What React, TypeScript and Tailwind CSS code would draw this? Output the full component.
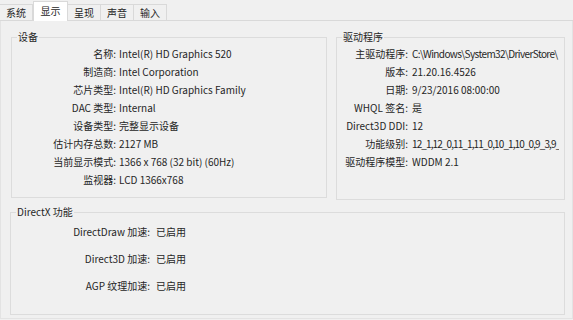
const font = { fontFamily: '"Noto Sans CJK SC", "Noto Sans", sans-serif' };

const tabs = ["系统", "显示", "呈现", "声音", "输入"];
const tabWidths = ["w-[33px]", "w-[35px]", "w-[33px]", "w-[33px]", "w-[33px]"];

const device: [string, string][] = [
  ["名称:", "Intel(R) HD Graphics 520"],
  ["制造商:", "Intel Corporation"],
  ["芯片类型:", "Intel(R) HD Graphics Family"],
  ["DAC 类型:", "Internal"],
  ["设备类型:", "完整显示设备"],
  ["估计内存总数:", "2127 MB"],
  ["当前显示模式:", "1366 x 768 (32 bit) (60Hz)"],
  ["监视器:", "LCD 1366x768"],
];

// long values are clipped by the box, tightened a bit so they show what the dialog shows
const driver: [string, string, string][] = [
  ["主驱动程序:", "C:\\Windows\\System32\\DriverStore\\", "tracking-[-0.6px]"],
  ["版本:", "21.20.16.4526", ""],
  ["日期:", "9/23/2016 08:00:00", ""],
  ["WHQL 签名:", "是", ""],
  ["Direct3D DDI:", "12", ""],
  ["功能级别:", "12_1,12_0,11_1,11_0,10_1,10_0,9_3,9_", "tracking-[-0.9px]"],
  ["驱动程序模型:", "WDDM 2.1", ""],
];

const directx: [string, string][] = [
  ["DirectDraw 加速:", "已启用"],
  ["Direct3D 加速:", "已启用"],
  ["AGP 纹理加速:", "已启用"],
];

const Group = ({ title, className, children }: { title: string; className: string; children: React.ReactNode }) => (
  <fieldset className={`min-w-0 shrink-0 border border-[#dcdcdc] ${className}`}>
    <legend className="ml-[5px] px-[1px] leading-[14px]">{title}</legend>
    {children}
  </fieldset>
);

export default function App() {
  return (
    <div className="w-[573px] h-[320px] bg-[#f0f0f0] overflow-hidden text-[10px] text-[#262626]" style={font}>
      <div className="flex items-end h-[21px] border-b border-[#d9d9d9]">
        {tabs.map((t, i) =>
          i === 1 ? (
            <div
              key={t}
              className={`${tabWidths[i]} h-[20px] -mb-px relative z-10 bg-white border-x border-t border-[#d9d9d9] flex justify-center pt-[1px] leading-[16px]`}
            >
              {t}
            </div>
          ) : (
            <div key={t} className={`${tabWidths[i]} h-[16px] border-t border-r border-[#d9d9d9] flex justify-center leading-[15px]`}>
              {t}
            </div>
          )
        )}
      </div>

      <div className="h-[298px] border-x border-b border-[#e3e3e3] pl-[10px] pr-[7px] pt-[9px]">
        <div className="flex gap-[9px]">
          <Group title="设备" className="w-[316px] h-[168px]">
            <div className="grid grid-cols-[104px_1fr] gap-x-[3px] pt-[1px]">
              {device.map(([k, v]) => (
                <div key={k} className="contents">
                  <div className="text-right leading-[18px] whitespace-nowrap">{k}</div>
                  <div className="leading-[18px] whitespace-nowrap">{v}</div>
                </div>
              ))}
            </div>
          </Group>
          <Group title="驱动程序" className="w-[229px] h-[170px]">
            <div className="grid grid-cols-[71px_minmax(0,1fr)] gap-x-[4px] pt-[1px] pr-[5px]">
              {driver.map(([k, v, tight]) => (
                <div key={k} className="contents">
                  <div className="text-right leading-[18px] whitespace-nowrap">{k}</div>
                  <div className={`leading-[18px] whitespace-nowrap overflow-hidden ${tight}`}>{v}</div>
                </div>
              ))}
            </div>
          </Group>
        </div>

        <Group title="DirectX 功能" className="w-[555px] h-[110px] mt-[5px] -ml-px">
          <div className="grid grid-cols-[139px_1fr] gap-x-[6px] -mt-[1px]">
            {directx.map(([k, v]) => (
              <div key={k} className="contents">
                <div className="text-right leading-[27px] whitespace-nowrap">{k}</div>
                <div className="leading-[27px] whitespace-nowrap">{v}</div>
              </div>
            ))}
          </div>
        </Group>
      </div>
    </div>
  );
}
